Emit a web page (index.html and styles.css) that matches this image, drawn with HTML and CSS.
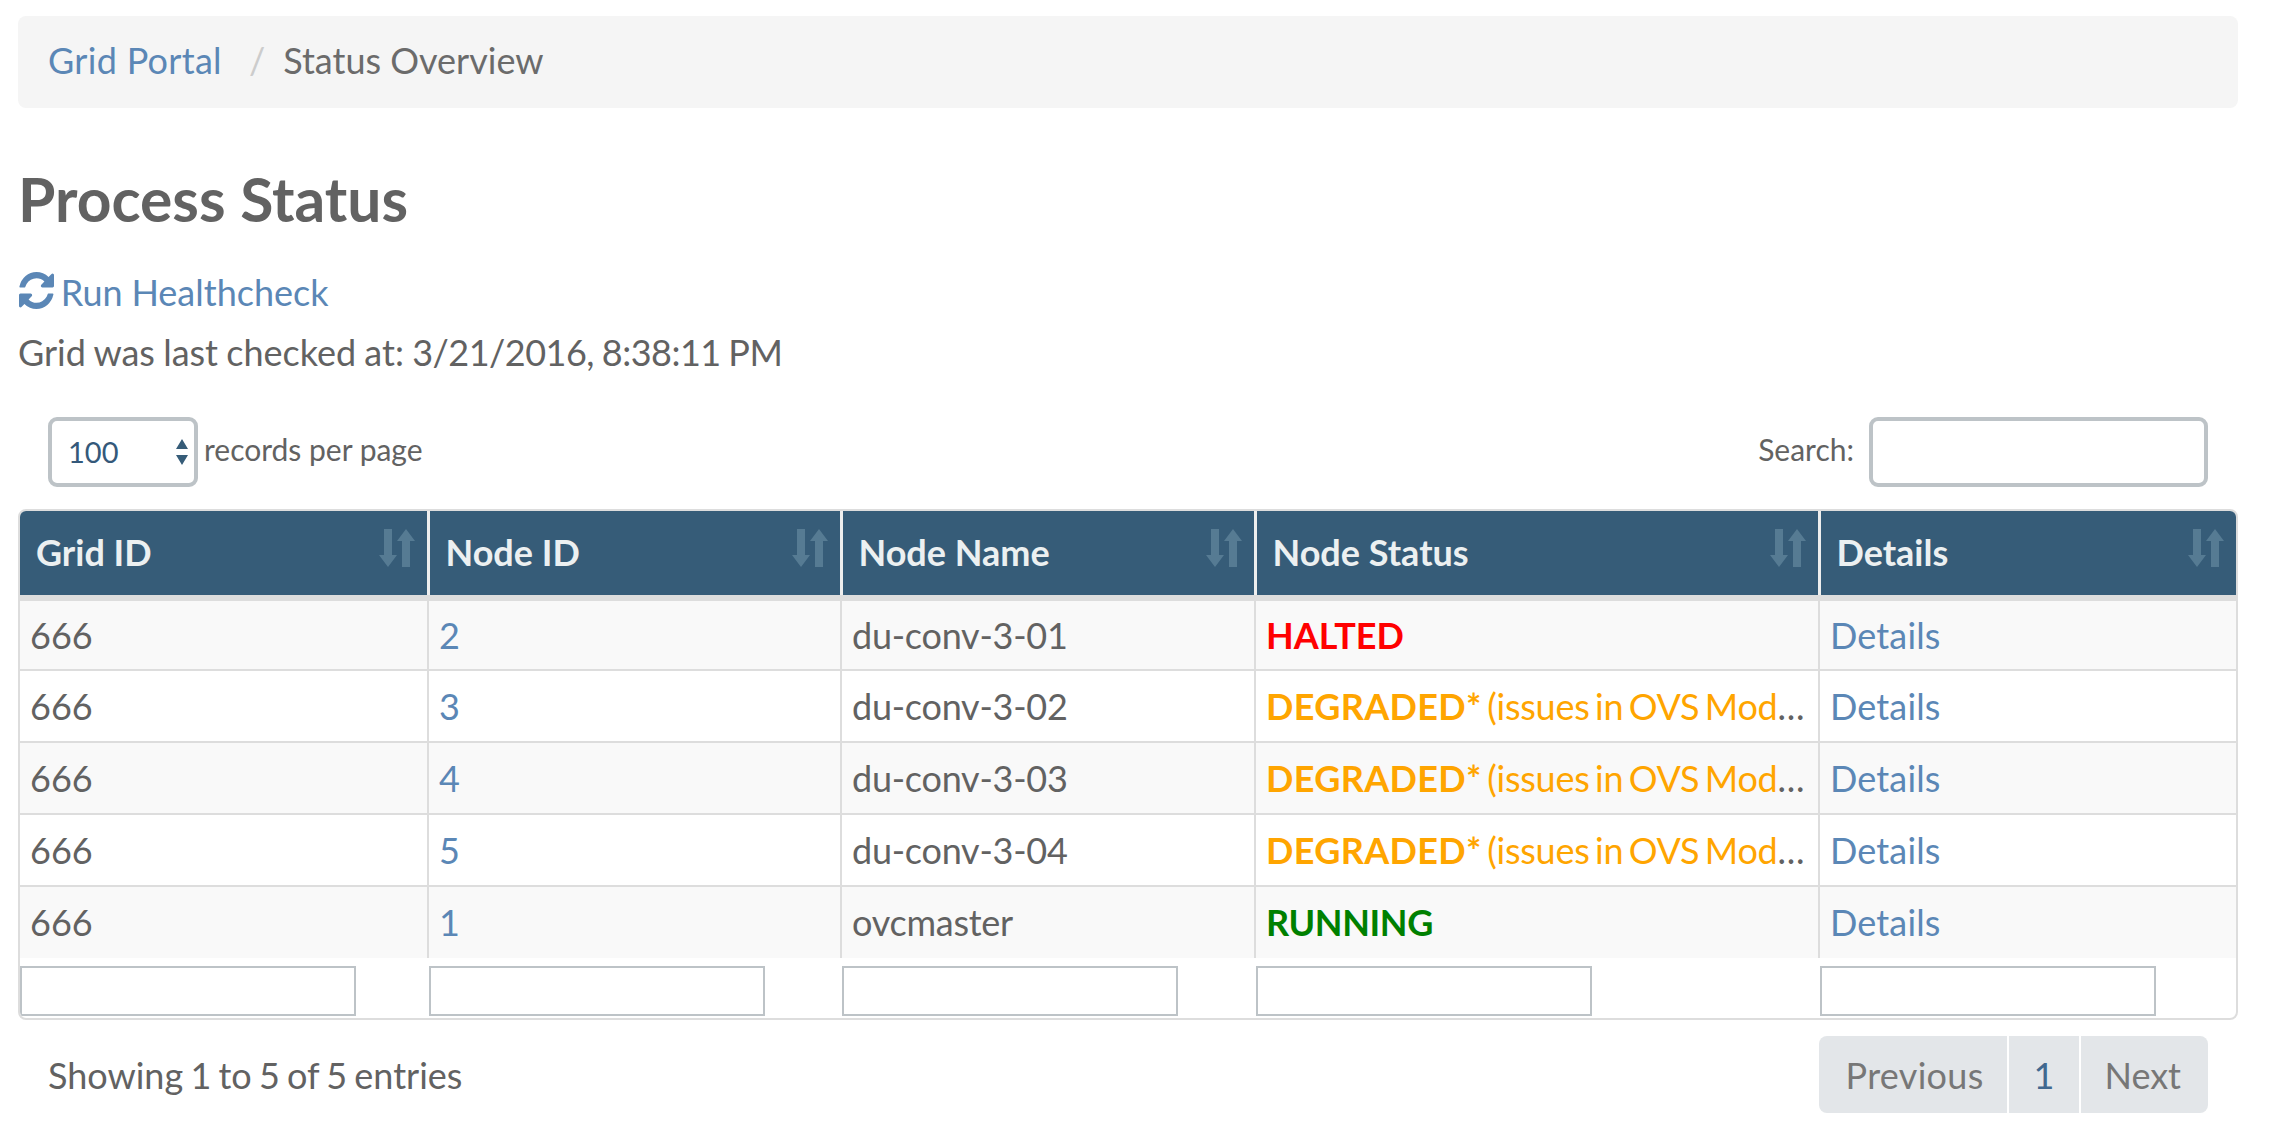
FILE: index.html
```html
<!DOCTYPE html>
<html lang="en">
<head>
    <meta charset="UTF-8">
    <title>Process Status</title>
    <link rel="stylesheet" href="styles.css">
</head>
<body>
    <ul class="breadcrumb">
        <li><a href="#">Grid Portal</a></li>
        <li class="sep">/</li>
        <li class="here">Status Overview</li>
    </ul>

    <h1>Process Status</h1>

    <p class="run-line">
        <a href="#" class="run-link">
            <svg class="refresh" viewBox="128 128 1536 1536" preserveAspectRatio="none"><path fill="currentColor" d="M1639 1056q0 5-1 7-64 268-268 434.5t-478 166.5q-146 0-282.5-55t-243.5-157l-129 129q-19 19-45 19t-45-19-19-45v-448q0-26 19-45t45-19h448q26 0 45 19t19 45-19 45l-137 137q71 66 161 102t187 36q134 0 250-65t186-179q11-17 53-117 8-23 30-23h192q13 0 22.5 9.5t9.5 22.5zm25-800v448q0 26-19 45t-45 19h-448q-26 0-45-19t-19-45 19-45l138-138q-148-137-349-137-134 0-250 65t-186 179q-11 17-53 117-8 23-30 23h-199q-13 0-22.5-9.5t-9.5-22.5v-7q65-268 270-434.5t480-166.5q146 0 284 55.5t245 156.5l130-129q19-19 45-19t45 19 19 45z"/></svg>
            Run Healthcheck
        </a>
    </p>
    <p class="checked">Grid was last checked at: <span class="stamp">3/21/2016, 8:38:11 PM</span></p>

    <div class="controls">
        <label class="length">
            <span class="select-box"><span class="select-value">100</span>
                <svg class="updown" viewBox="0 0 14 26"><path fill="currentColor" d="M7 0l6 10H1zM7 26L1 16h12z"/></svg>
            </span>
            <span class="control-text">records per page</span>
        </label>
        <label class="search"><span class="control-text">Search:</span> <input type="text"></label>
    </div>

    <div class="table-wrap">
        <table>
            <colgroup>
                <col class="col-grid">
                <col class="col-node">
                <col class="col-name">
                <col class="col-status">
                <col>
            </colgroup>
            <thead>
                <tr>
                    <th>Grid ID <svg class="sort" viewBox="0 0 36 38"><use href="#arrows"/></svg></th>
                    <th>Node ID <svg class="sort" viewBox="0 0 36 38"><use href="#arrows"/></svg></th>
                    <th>Node Name <svg class="sort" viewBox="0 0 36 38"><use href="#arrows"/></svg></th>
                    <th>Node Status <svg class="sort" viewBox="0 0 36 38"><use href="#arrows"/></svg></th>
                    <th>Details <svg class="sort" viewBox="0 0 36 38"><use href="#arrows"/></svg></th>
                </tr>
            </thead>
            <tbody>
                <tr>
                    <td>666</td>
                    <td><a href="#">2</a></td>
                    <td class="name">du-conv-3-01</td>
                    <td class="status"><b class="halted">HALTED</b></td>
                    <td><a href="#" class="details">Details</a></td>
                </tr>
                <tr>
                    <td>666</td>
                    <td><a href="#">3</a></td>
                    <td class="name">du-conv-3-02</td>
                    <td class="status"><span class="degraded"><b>DEGRADED*</b> (issues in OVS Module)</span></td>
                    <td><a href="#" class="details">Details</a></td>
                </tr>
                <tr>
                    <td>666</td>
                    <td><a href="#">4</a></td>
                    <td class="name">du-conv-3-03</td>
                    <td class="status"><span class="degraded"><b>DEGRADED*</b> (issues in OVS Module)</span></td>
                    <td><a href="#" class="details">Details</a></td>
                </tr>
                <tr>
                    <td>666</td>
                    <td><a href="#">5</a></td>
                    <td class="name">du-conv-3-04</td>
                    <td class="status"><span class="degraded"><b>DEGRADED*</b> (issues in OVS Module)</span></td>
                    <td><a href="#" class="details">Details</a></td>
                </tr>
                <tr>
                    <td>666</td>
                    <td><a href="#">1</a></td>
                    <td class="name">ovcmaster</td>
                    <td class="status"><b class="running">RUNNING</b></td>
                    <td><a href="#" class="details">Details</a></td>
                </tr>
            </tbody>
            <tfoot>
                <tr>
                    <td><input type="text"></td>
                    <td><input type="text"></td>
                    <td><input type="text"></td>
                    <td><input type="text"></td>
                    <td><input type="text"></td>
                </tr>
            </tfoot>
        </table>
    </div>

    <div class="table-footer">
        <div class="info">Showing 1 to 5 of 5 entries</div>
        <div class="pagination">
            <a href="#" class="off prev">Previous</a>
            <a href="#" class="current">1</a>
            <a href="#" class="off">Next</a>
        </div>
    </div>

    <svg class="defs" width="0" height="0">
        <defs>
            <g id="arrows" fill="currentColor">
                <path d="M5 0h8v26h5l-9 12-9-12h5z"/>
                <path d="M27 0l9 12h-5v26h-8V12h-5z"/>
            </g>
        </defs>
    </svg>
</body>
</html>
```

FILE: styles.css
```css
body {
    font-family: 'Lato', sans-serif;
    font-size: 36px;
    color: #626262;
    background-color: #fff;
    margin: 0;
    padding: 16px 48px 0 18px;
    overflow: hidden;
}
a {
    color: #5b87b6;
    text-decoration: none;
}
.breadcrumb {
    display: flex;
    align-items: center;
    height: 92px;
    margin: 0;
    padding: 0 30px 4px;
    box-sizing: border-box;
    list-style: none;
    background-color: #f5f5f5;
    border-radius: 8px;
}
.breadcrumb a {
    letter-spacing: 0.3px;
}
.breadcrumb .sep {
    color: #ccc;
    margin: 0 18px 0 27px;
}
.breadcrumb .here {
    color: #6b6b6b;
}
h1 {
    font-size: 60.5px;
    font-weight: 700;
    line-height: 72px;
    margin: 55px 0 0;
}
.run-line {
    margin: 32px 0 0;
    line-height: 50px;
}
.run-link {
    word-spacing: -0.5px;
}
.refresh {
    width: 35px;
    height: 37px;
    margin-left: 1px;
    margin-right: -2px;
    vertical-align: -3px;
}
.checked {
    margin: 10px 0 0;
    line-height: 50px;
    word-spacing: -1px;
}
.stamp {
    letter-spacing: -0.5px;
}
.controls {
    display: flex;
    justify-content: space-between;
    align-items: center;
    height: 70px;
    margin-top: 40px;
    padding: 0 30px 0 30px;
    font-size: 30px;
}
.length,
.search {
    display: flex;
    align-items: center;
}
.control-text {
    padding-bottom: 6px;
}
.select-box {
    display: flex;
    align-items: center;
    justify-content: space-between;
    box-sizing: border-box;
    width: 150px;
    height: 70px;
    margin-right: 6px;
    padding: 0 5px 0 16px;
    border: 4px solid #bdc3c7;
    border-radius: 9px;
    color: #34597a;
}
.select-value {
    font-size: 29px;
    padding-bottom: 2px;
}
.updown {
    width: 14px;
    height: 26px;
    color: #365c78;
}
.search input {
    box-sizing: border-box;
    width: 339px;
    height: 70px;
    margin-left: 15px;
    border: 4px solid #bdc3c7;
    border-radius: 9px;
    background: #fff;
    outline: none;
}
.table-wrap {
    margin-top: 22px;
    border: 2px solid #ddd;
    border-radius: 8px;
    overflow: hidden;
}
table {
    width: 100%;
    table-layout: fixed;
    border-collapse: collapse;
}
.col-grid { width: 408px; }
.col-node { width: 413px; }
.col-name { width: 414px; }
.col-status { width: 564px; }
th {
    position: relative;
    box-sizing: border-box;
    height: 87px;
    padding: 0 16px 2px;
    text-align: left;
    color: #ecf0f1;
    background-color: #365c78;
    border-left: 3px solid #eee;
    border-bottom: 6px solid #ddd;
    font-weight: 700;
}
th:first-child {
    border-left: none;
}
.sort {
    position: absolute;
    right: 12px;
    top: 18px;
    width: 36px;
    height: 38px;
    color: #567b93;
}
tbody td {
    box-sizing: border-box;
    height: 72px;
    padding: 0 10px 1px;
    white-space: nowrap;
    overflow: hidden;
    text-overflow: ellipsis;
    border-left: 2px solid #ddd;
    border-bottom: 2px solid #ddd;
}
tbody td:first-child {
    border-left: none;
}
tbody tr:nth-child(odd) td {
    background-color: #f9f9f9;
}
tbody tr:last-child td {
    border-bottom: none;
    padding-bottom: 2px;
}
tbody .name {
    letter-spacing: -0.25px;
}
tbody .status {
    padding-right: 2px;
}
.details {
    letter-spacing: 0.15px;
}
.halted { color: #f00; }
.degraded {
    color: #ffa500;
    letter-spacing: -0.25px;
    word-spacing: -3.5px;
}
.degraded b {
    letter-spacing: 0.35px;
}
.running {
    color: #008000;
    letter-spacing: -0.4px;
}
tfoot td {
    height: 60px;
    padding: 0 0 0 1px;
}
tfoot td:first-child {
    padding-left: 0;
}
tfoot input {
    display: block;
    box-sizing: border-box;
    width: 336px;
    height: 50px;
    margin: 8px 0 2px;
    border: 2px solid #bdc3c7;
    background: #fff;
}
.defs {
    position: absolute;
}
.table-footer {
    display: flex;
    justify-content: space-between;
    align-items: center;
    margin-top: 16px;
    padding: 0 30px;
}
.info {
    word-spacing: -2px;
}
.pagination {
    display: flex;
    height: 77px;
    border-radius: 8px;
    overflow: hidden;
}
.pagination a {
    display: flex;
    align-items: center;
    padding: 0 25px;
    background-color: #e3e6e9;
    border-left: 2px solid #fff;
}
.pagination a:first-child {
    border-left: none;
    padding-left: 27px;
}
.pagination a:last-child {
    padding: 0 27px 0 23px;
}
.pagination .prev {
    letter-spacing: 0.3px;
    padding-right: 23px;
}
.pagination .off {
    color: #777;
}
.pagination .current {
    color: #41688f;
}
```
